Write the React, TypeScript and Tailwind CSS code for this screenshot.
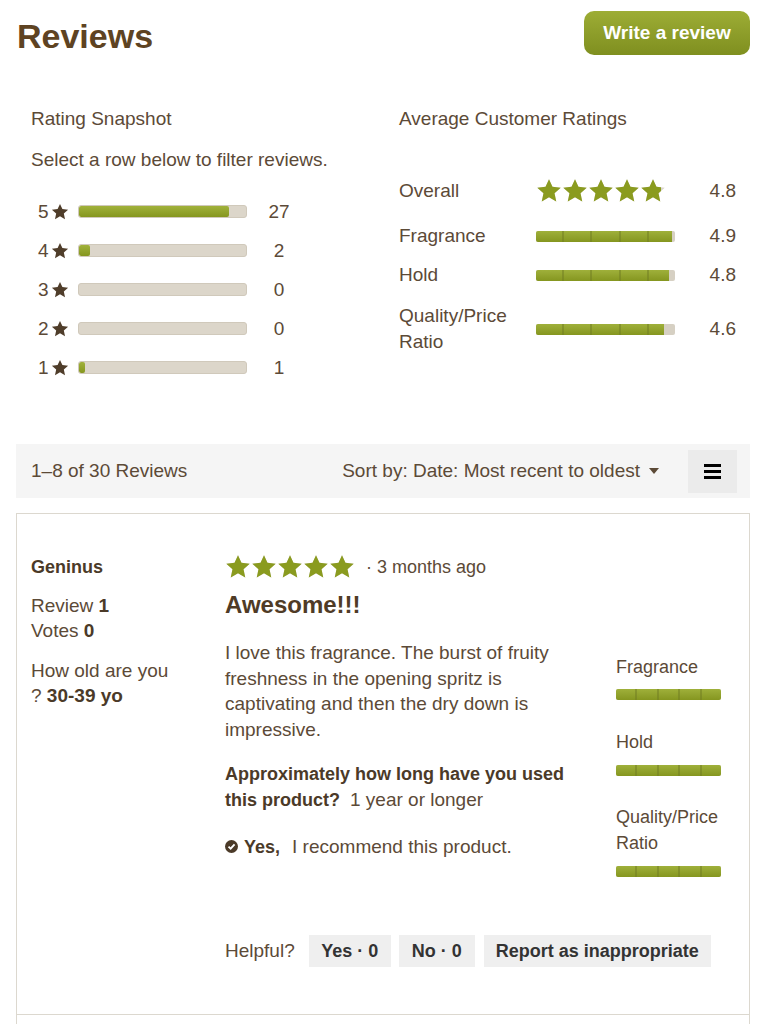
import React from "react";

const STAR_POINTS =
  "12,1.2 15.2,8.1 22.8,8.9 17.1,14 18.7,21.6 12,17.7 5.3,21.6 6.9,14 1.2,8.9 8.8,8.1";

function Star({ className }: { className: string }) {
  return (
    <svg viewBox="0 0 24 24" className={className}>
      <polygon points={STAR_POINTS} />
    </svg>
  );
}

function StarRow({ value, big }: { value: number; big?: boolean }) {
  const starCls = big
    ? "w-[26px] h-[28px] shrink-0"
    : "w-[26px] h-[26px] shrink-0";
  const stars = [0, 1, 2, 3, 4];
  return (
    <div className="relative w-[130px]">
      <div className="flex fill-[#d9d4ca]">
        {stars.map((i) => (
          <Star key={i} className={starCls} />
        ))}
      </div>
      <div
        className="absolute left-0 top-0 overflow-hidden"
        style={{ width: `${(value / 5) * 100}%` }}
      >
        <div className="flex w-[130px] fill-[#8a9b1f]">
          {stars.map((i) => (
            <Star key={i} className={starCls} />
          ))}
        </div>
      </div>
    </div>
  );
}

function SegBar({ value, className }: { value: number; className: string }) {
  return (
    <div
      className={
        "relative overflow-hidden rounded-[2px] bg-[#d6d0c3] " + className
      }
    >
      <div
        className="absolute inset-y-0 left-0 bg-gradient-to-b from-[#9fb03a] to-[#85961f]"
        style={{ width: `${(value / 5) * 100}%` }}
      />
      <div className="absolute inset-0 flex">
        <div className="flex-1 border-r-2 border-[#6f7b22]/50" />
        <div className="flex-1 border-r-2 border-[#6f7b22]/50" />
        <div className="flex-1 border-r-2 border-[#6f7b22]/50" />
        <div className="flex-1 border-r-2 border-[#6f7b22]/50" />
        <div className="flex-1" />
      </div>
    </div>
  );
}

function SnapshotRow({ n, count }: { n: number; count: number }) {
  return (
    <div className="flex h-[39px] items-center">
      <div className="flex w-[47px] items-center pl-[7px]">
        <span>{n}</span>
        <svg viewBox="0 0 24 24" className="ml-[2px] h-[18px] w-[18px] fill-[#4f3d2a]">
          <polygon points={STAR_POINTS} />
        </svg>
      </div>
      <div className="relative h-[13px] w-[169px] overflow-hidden rounded-[3px] border border-[#d0c9bb] bg-[#dcd6ca]">
        <div
          className="absolute inset-y-0 left-0 rounded-[2px] bg-gradient-to-b from-[#a1b23b] to-[#85961e]"
          style={{ width: `${(count / 30) * 100}%` }}
        />
      </div>
      <div className="w-[64px] text-center">{count}</div>
    </div>
  );
}

export default function App() {
  return (
    <div className="w-[765px] bg-white font-['Liberation_Sans',Arial,sans-serif] text-[19px] leading-[26px] text-[#5c4a37]">
      {/* Header */}
      <div className="flex items-start justify-between pl-[17px] pr-[15px] pt-[11px]">
        <h1 className="pt-[3px] text-[34px] font-bold leading-[44px] text-[#5e4322]">
          Reviews
        </h1>
        <button className="flex h-[44px] w-[166px] items-center justify-center rounded-[10px] bg-gradient-to-b from-[#9dad35] to-[#7f8f1f] text-[19px] font-bold text-white">
          Write a review
        </button>
      </div>

      {/* Snapshot */}
      <div className="mt-[48px] grid grid-cols-[368px_1fr] pl-[31px] pr-[29px]">
        <div>
          <div>Rating Snapshot</div>
          <div className="mt-[15px]">Select a row below to filter reviews.</div>
          <div className="mt-[19px]">
            <SnapshotRow n={5} count={27} />
            <SnapshotRow n={4} count={2} />
            <SnapshotRow n={3} count={0} />
            <SnapshotRow n={2} count={0} />
            <SnapshotRow n={1} count={1} />
          </div>
        </div>
        <div>
          <div>Average Customer Ratings</div>
          <div className="mt-[45px] flex h-[28px] items-center">
            <div className="w-[137px]">Overall</div>
            <div className="w-[139px]">
              <StarRow value={4.8} big />
            </div>
            <div className="flex-1 text-right">4.8</div>
          </div>
          <div className="mt-[18px] flex h-[26px] items-center">
            <div className="w-[137px]">Fragrance</div>
            <div className="w-[139px]">
              <SegBar value={4.9} className="h-[11px] w-[139px]" />
            </div>
            <div className="flex-1 text-right">4.9</div>
          </div>
          <div className="mt-[13px] flex h-[26px] items-center">
            <div className="w-[137px]">Hold</div>
            <div className="w-[139px]">
              <SegBar value={4.8} className="h-[11px] w-[139px]" />
            </div>
            <div className="flex-1 text-right">4.8</div>
          </div>
          <div className="mt-[15px] flex items-center">
            <div className="w-[137px]">
              Quality/Price
              <br />
              Ratio
            </div>
            <div className="w-[139px]">
              <SegBar value={4.6} className="h-[11px] w-[139px]" />
            </div>
            <div className="flex-1 text-right">4.6</div>
          </div>
        </div>
      </div>

      {/* Toolbar */}
      <div className="ml-[16px] mr-[15px] mt-[57px] flex h-[54px] items-center bg-[#f5f5f5] pl-[15px] pr-[13px]">
        <div>1–8 of 30 Reviews</div>
        <div className="ml-auto flex items-center">
          <span>Sort by: Date: Most recent to oldest</span>
          <svg viewBox="0 0 10 6" className="ml-[9px] h-[6px] w-[10px] fill-[#5c4a37]">
            <polygon points="0,0 10,0 5,6" />
          </svg>
        </div>
        <div className="ml-[29px] flex h-[43px] w-[49px] flex-col items-center justify-center gap-[3px] bg-[#ebebeb]">
          <div className="h-[3px] w-[17px] bg-black" />
          <div className="h-[3px] w-[17px] bg-black" />
          <div className="h-[3px] w-[17px] bg-black" />
        </div>
      </div>

      {/* Review card */}
      <div className="ml-[16px] mr-[15px] mt-[15px] flex border border-[#dcd8cf] pb-[47px] pl-[14px] pr-[27px] pt-[40px]">
        <div className="w-[194px] shrink-0">
          <div className="text-[18px] font-bold text-[#4b3a28]">Geninus</div>
          <div className="mt-[13px] leading-[25px]">
            Review <span className="font-bold text-[#4b3a28]">1</span>
          </div>
          <div className="leading-[25px]">
            Votes <span className="font-bold text-[#4b3a28]">0</span>
          </div>
          <div className="mt-[15px] leading-[25px]">
            How old are you
            <br />? <span className="font-bold text-[#4b3a28]">30-39 yo</span>
          </div>
        </div>
        <div className="flex-1">
          <div className="flex h-[26px] items-center">
            <StarRow value={5} />
            <span className="ml-[11px] text-[18px]">· 3 months ago</span>
          </div>
          <div className="mt-[10px] text-[24px] font-bold leading-[30px] text-[#4f3b26]">
            Awesome!!!
          </div>
          <div className="mt-[20px] flex">
            <div className="w-[352px]">
              <p className="leading-[25.67px]">
                I love this fragrance. The burst of fruity freshness in the opening
                spritz is captivating and then the dry down is impressive.
              </p>
              <div className="mt-[18px]">
                <div className="text-[18px] font-bold text-[#4b3a28]">
                  Approximately how long have you used
                </div>
                <div className="flex items-baseline">
                  <span className="text-[18px] font-bold text-[#4b3a28]">
                    this product?
                  </span>
                  <span className="ml-[10px]">1 year or longer</span>
                </div>
              </div>
              <div className="mt-[21px] flex items-center">
                <svg viewBox="0 0 14 14" className="h-[13px] w-[13px]">
                  <circle cx="7" cy="7" r="7" fill="#4b3a28" />
                  <path
                    d="M3.8 7.2 L6.1 9.4 L10.3 4.8"
                    stroke="#fff"
                    strokeWidth="2"
                    fill="none"
                  />
                </svg>
                <span className="ml-[6px] text-[18px] font-bold text-[#4b3a28]">Yes,</span>
                <span className="ml-[12px]">I recommend this product.</span>
              </div>
            </div>
            <div className="ml-auto w-[106px] pt-[14px] text-[18px]">
              <div>Fragrance</div>
              <SegBar value={5} className="mt-[9px] h-[11px] w-[105px]" />
              <div className="mt-[29px]">Hold</div>
              <SegBar value={5} className="mt-[10px] h-[11px] w-[105px]" />
              <div className="mt-[28px]">
                Quality/Price
                <br />
                Ratio
              </div>
              <SegBar value={5} className="mt-[10px] h-[11px] w-[105px]" />
            </div>
          </div>
          <div className="mt-[58px] flex items-center">
            <span>Helpful?</span>
            <button className="ml-[14px] flex h-[32px] w-[82px] items-center justify-center bg-[#efefef] text-[18px] font-bold text-[#333333]">
              Yes · 0
            </button>
            <button className="ml-[8px] flex h-[32px] w-[76px] items-center justify-center bg-[#efefef] text-[18px] font-bold text-[#333333]">
              No · 0
            </button>
            <button className="ml-[9px] flex h-[32px] w-[227px] items-center justify-center bg-[#efefef] text-[18px] font-bold text-[#333333]">
              Report as inappropriate
            </button>
          </div>
        </div>
      </div>
      <div className="ml-[16px] mr-[15px] h-[40px] border-x border-[#dcd8cf]" />
    </div>
  );
}
